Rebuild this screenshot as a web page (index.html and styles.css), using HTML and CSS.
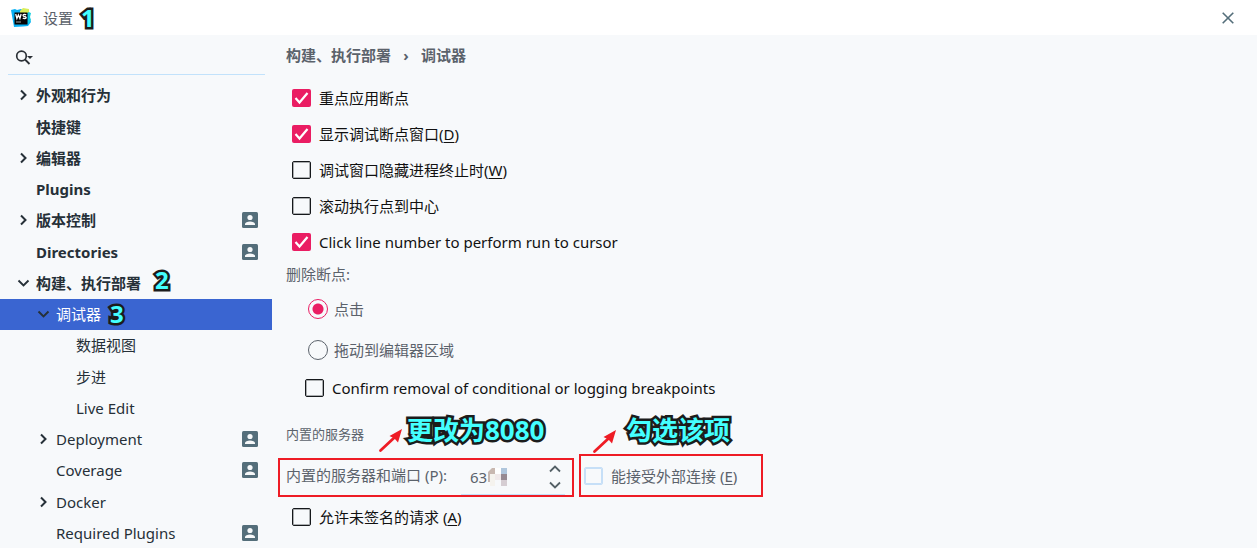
FILE: index.html
```html
<!DOCTYPE html>
<html lang="zh-CN">
<head>
<meta charset="utf-8">
<meta name="viewport" content="width=device-width, initial-scale=1">
<title>设置</title>
<link rel="stylesheet" href="styles.css">
</head>
<body>
<svg class="defs" aria-hidden="true">
  <symbol id="right" viewBox="0 0 16 16"><path d="M6 3.500 10.500 8l-4.500 4.500" fill="none" stroke="currentColor" stroke-width="2"/></symbol>
  <symbol id="down" viewBox="0 0 16 16"><path d="M3.500 5.500l5 5 5-5" fill="none" stroke="currentColor" stroke-width="1.900"/></symbol>
  <symbol id="person" viewBox="0 0 16 16"><rect width="16" height="16" rx="1.500" fill="#546e7a"/><circle cx="8" cy="5.500" r="2.600" fill="#f7f9fa"/><path d="M3 13v-1c0-1.700 2.500-2.600 5-2.600s5 .9 5 2.600v1z" fill="#f7f9fa"/></symbol>
  <symbol id="arrow" viewBox="0 0 26 26"><path d="M2.500 23.500 17 10" stroke="#ee1c25" stroke-width="2.800" stroke-linecap="round"/><path d="M24 2 20 15.500 16.500 11.500l-5-2.500z" fill="#ee1c25"/></symbol>
</svg>
<header class="titlebar">
  <svg class="logo" viewBox="0 0 20 20" aria-hidden="true">
    <path d="M0 2 4 1l2 1 4-1 3 2 4-1 2 4-1 3 2 5-3 4-5 .5L3 19z" fill="#07b0f5"/>
    <path d="M9 3l3-3 6 1v4H9z" fill="#d9ee5a"/><path d="M17 4l3 1-1 4 1 3-3 4z" fill="#15cfe0"/>
    <rect x="3.500" y="4.500" width="13" height="12" fill="#050505"/>
    <path d="M4.700 6l1.200 4.500L7.400 7l1.500 3.500L10.100 6M15.200 7c-1-.9-3.200-.7-3.200.5 0 1.300 3.200.7 3.200 2 0 1.200-2.200 1.400-3.400.4" fill="none" stroke="#fff" stroke-width="1.300"/><path d="M5 14h5" stroke="#aaa"/>
  </svg>
  <h1 class="title">设置</h1>
  <span class="mark">1</span>
  <button class="close" aria-label="关闭"><svg viewBox="0 0 12 12"><path d="M.7.7l10.600 10.600M11.300.7.700 11.300" stroke="#546e7a" stroke-width="1.600"/></svg></button>
</header>
<div class="body">
  <nav class="sidebar" aria-label="设置">
    <label class="search">
      <svg viewBox="0 0 18 16" aria-hidden="true"><circle cx="6.500" cy="6" r="4.800" fill="none" stroke="#2b3036" stroke-width="1.700"/><path d="M10 9.500l4.500 4.500" stroke="#2b3036" stroke-width="1.800"/><path d="M12 6h6l-3 3z" fill="#2b3036"/></svg>
      <input type="search" aria-label="搜索">
    </label>
    <ul class="tree">
      <li><a class="row bold" href="#"><svg class="chev"><use href="#right"/></svg><span>外观和行为</span></a></li>
      <li><a class="row bold" href="#"><i class="chev"></i><span>快捷键</span></a></li>
      <li><a class="row bold" href="#"><svg class="chev"><use href="#right"/></svg><span>编辑器</span></a></li>
      <li><a class="row bold" href="#"><i class="chev"></i><span>Plugins</span></a></li>
      <li><a class="row bold" href="#"><svg class="chev"><use href="#right"/></svg><span>版本控制</span><svg class="person"><use href="#person"/></svg></a></li>
      <li><a class="row bold" href="#"><i class="chev"></i><span>Directories</span><svg class="person"><use href="#person"/></svg></a></li>
      <li><a class="row bold" href="#"><svg class="chev"><use href="#down"/></svg><span>构建、执行部署</span><b class="mark raised">2</b></a></li>
      <li><a class="row level2 selected" href="#"><svg class="chev"><use href="#down"/></svg><span>调试器</span><b class="mark">3</b></a></li>
      <li><a class="row level3" href="#"><i class="chev"></i><span>数据视图</span></a></li>
      <li><a class="row level3" href="#"><i class="chev"></i><span>步进</span></a></li>
      <li><a class="row level3" href="#"><i class="chev"></i><span>Live Edit</span></a></li>
      <li><a class="row level2" href="#"><svg class="chev"><use href="#right"/></svg><span>Deployment</span><svg class="person"><use href="#person"/></svg></a></li>
      <li><a class="row level2" href="#"><i class="chev"></i><span>Coverage</span><svg class="person"><use href="#person"/></svg></a></li>
      <li><a class="row level2" href="#"><svg class="chev"><use href="#right"/></svg><span>Docker</span></a></li>
      <li><a class="row level2" href="#"><i class="chev"></i><span>Required Plugins</span><svg class="person"><use href="#person"/></svg></a></li>
    </ul>
  </nav>
  <main class="content">
    <div class="crumbs"><a href="#">构建、执行部署</a><span class="sep">›</span><a href="#">调试器</a></div>
    <div class="options">
      <label class="opt"><input type="checkbox" checked><span>重点应用断点</span></label>
      <label class="opt"><input type="checkbox" checked><span>显示调试断点窗口(<u>D</u>)</span></label>
      <label class="opt"><input type="checkbox"><span>调试窗口隐藏进程终止时(<u>W</u>)</span></label>
      <label class="opt"><input type="checkbox"><span>滚动执行点到中心</span></label>
      <label class="opt"><input type="checkbox" checked><span>Click line number to perform run to cursor</span></label>
    </div>
    <fieldset class="remove">
      <legend>删除断点:</legend>
      <label class="pick"><input type="radio" name="remove" checked><span>点击</span></label>
      <label class="pick"><input type="radio" name="remove"><span>拖动到编辑器区域</span></label>
      <label class="opt confirm"><input type="checkbox"><span>Confirm removal of conditional or logging breakpoints</span></label>
    </fieldset>
    <section class="server">
      <div class="server-head">
        <h2>内置的服务器</h2>
        <div class="note note-port"><svg><use href="#arrow"/></svg><strong>更改为8080</strong></div>
        <div class="note note-ext"><svg><use href="#arrow"/></svg><strong>勾选该项</strong></div>
      </div>
      <div class="server-row">
        <div class="frame port">
          <label for="port">内置的服务器和端口 (P):</label>
          <div class="spinner">
            <input id="port" type="text" value="63">
            <svg class="mosaic" viewBox="0 0 20 18" aria-hidden="true"><path d="M0 4l4-4h3v6H2v8H0z" fill="#c8b8b0"/><path d="M2 6h5v12H2z" fill="#f5f3ee"/><path d="M7 0h6v6H7z" fill="#fff"/><path d="M7 6h6v6H7z" fill="#f0e9ea"/><path d="M13 0h6v6h-6z" fill="#afc6dc"/><path d="M13 6h6v6h-6z" fill="#968a92"/><path d="M13 12h6v6h-6z" fill="#d5cdd2"/></svg>
            <div class="steps">
              <button aria-label="增加"><svg viewBox="0 0 12 8"><path d="M1 6.500l5-5 5 5"/></svg></button>
              <button aria-label="减少"><svg viewBox="0 0 12 8"><path d="M1 1.500l5 5 5-5"/></svg></button>
            </div>
          </div>
        </div>
        <label class="frame opt external"><input type="checkbox"><span>能接受外部连接 (<u>E</u>)</span></label>
      </div>
      <label class="opt unsigned"><input type="checkbox"><span>允许未签名的请求 (<u>A</u>)</span></label>
    </section>
  </main>
</div>
</body>
</html>
```

FILE: styles.css
```css
* { box-sizing: border-box; }
body {
  margin: 0;
  background: #f7f9fb;
  color: #111;
  font: 15px/20px "Noto Sans", "Noto Sans CJK SC", sans-serif;
  min-height: 100vh;
  overflow: hidden;
}
a { color: inherit; text-decoration: none; }
button { border: 0; padding: 0; background: none; display: flex; }
u { text-underline-offset: 2px; }
.defs { display: none; }

.titlebar {
  display: flex;
  align-items: center;
  height: 35px;
  padding: 0 23px 0 11px;
  background: #fff;
}
.logo { width: 20px; height: 20px; }
.title { margin: 0 6px 0 12px; font-size: 15px; font-weight: 400; color: #5b626b; }
.close { margin-left: auto; }
.close svg { width: 12px; height: 12px; }

.mark, .note strong {
  color: #4ff;
  font-weight: 700;
  -webkit-text-stroke: 5px #1c1c1c;
  paint-order: stroke fill;
}
.mark { font-size: 24px; padding: 0 2px; }

.body { display: flex; }
.sidebar { width: 272px; flex: none; color: #263038; }
.search {
  display: flex;
  align-items: center;
  height: 40px;
  margin: 0 7px 5px 8px;
  padding: 6px 0 0 7px;
  border-bottom: 1px solid #c2e2fb;
}
.search svg { width: 18px; height: 16px; flex: none; }
.search input { flex: 1; min-width: 0; border: 0; outline: 0; background: none; font: inherit; }

.tree { list-style: none; margin: 0; padding: 0; }
.tree li { height: 31px; }
.tree li:nth-child(4n + 1) { height: 32px; }
.row { display: flex; align-items: center; height: 31px; padding: 0 14px 2px 15px; }
.chev { width: 16px; height: 16px; margin-right: 5px; flex: none; }
.bold { font-weight: 700; }
.level2 { padding-left: 35px; }
.level3 { padding-left: 55px; }
.selected { background: #3a65d1; color: #fff; }
.selected .chev { color: #263038; }
.person { width: 16px; height: 16px; margin-left: auto; }
.row .mark { margin-left: 7px; }
.row .raised { margin-left: 12px; padding-bottom: 6px; }

.content { flex: 1; min-width: 0; padding: 10px 14px 0; }
.crumbs { display: flex; color: #5b626b; font-weight: 700; }
.sep { width: 30px; text-align: center; }
.options { padding-top: 15px; }
.opt { display: flex; align-items: center; height: 36px; padding-left: 6px; gap: 8px; }

input[type="checkbox"], input[type="radio"] {
  appearance: none;
  flex: none;
  margin: 0;
  width: 19px;
  height: 18px;
  border: 1px solid #15181b;
  border-radius: 2px;
}
input[type="checkbox"] { box-shadow: inset 0 0 0 1px #15181b55; }
input[type="checkbox"]:checked {
  border: 0;
  box-shadow: none;
  background: #ea1d63 url("data:image/svg+xml,%3Csvg xmlns='http://www.w3.org/2000/svg' viewBox='0 0 19 18'%3E%3Cpath d='M3.500 9l4 4.500 8-9.500' fill='none' stroke='white' stroke-width='2.200'/%3E%3C/svg%3E");
}
.remove { border: 0; margin: 0; padding: 0; color: #5b626b; }
.remove legend { padding: 4px 0; }
.pick { display: flex; align-items: center; height: 41px; padding-left: 22px; gap: 6px; }
input[type="radio"] { width: 20px; height: 20px; border: 1px solid #5b626b; border-radius: 50%; }
input[type="radio"]:checked { border-color: #ea1d63; background: radial-gradient(circle, #ea1d63 5px, transparent 6px); }
.confirm { padding-left: 19px; color: #111; }

.server-head { display: flex; align-items: center; height: 48px; }
.server h2 { width: 92px; margin: 8px 0 0; font-size: 13px; font-weight: 400; color: #5b626b; }
.note { display: flex; align-items: center; gap: 3px; }
.note svg { width: 26px; height: 26px; margin-top: 20px; }
.note strong { font-size: 26px; line-height: 32px; white-space: nowrap; }
.note-port { width: 214px; }
.note-ext svg { margin-top: 22px; }
.note-ext { gap: 8px; }
.server-row { display: flex; align-items: flex-end; gap: 5px; margin: 0 0 0 -8px; }
.frame { border: 2px solid #ee1c25; color: #5b626b; }
.port { display: flex; width: 296px; height: 39px; padding: 0 7px 0 6px; justify-content: space-between; }
.port > label { padding-top: 5px; }
.spinner { display: flex; align-items: center; width: 104px; border-bottom: 1px solid #c2e2fb; padding-left: 9px; }
.spinner input { width: 18px; padding: 0; border: 0; outline: 0; background: none; font: inherit; color: inherit; }
.mosaic { width: 20px; height: 18px; }
.steps { display: grid; gap: 8px; margin-left: auto; padding-right: 4px; }
.steps svg { width: 12px; height: 8px; fill: none; stroke: #546066; stroke-width: 1.800px; }
.external { width: 184px; height: 43px; padding-left: 3px; }
.external input[type="checkbox"] { border-color: #c6dff7; box-shadow: inset 0 0 0 1px #c6dff7; }
.unsigned { margin-top: 2px; }
```
